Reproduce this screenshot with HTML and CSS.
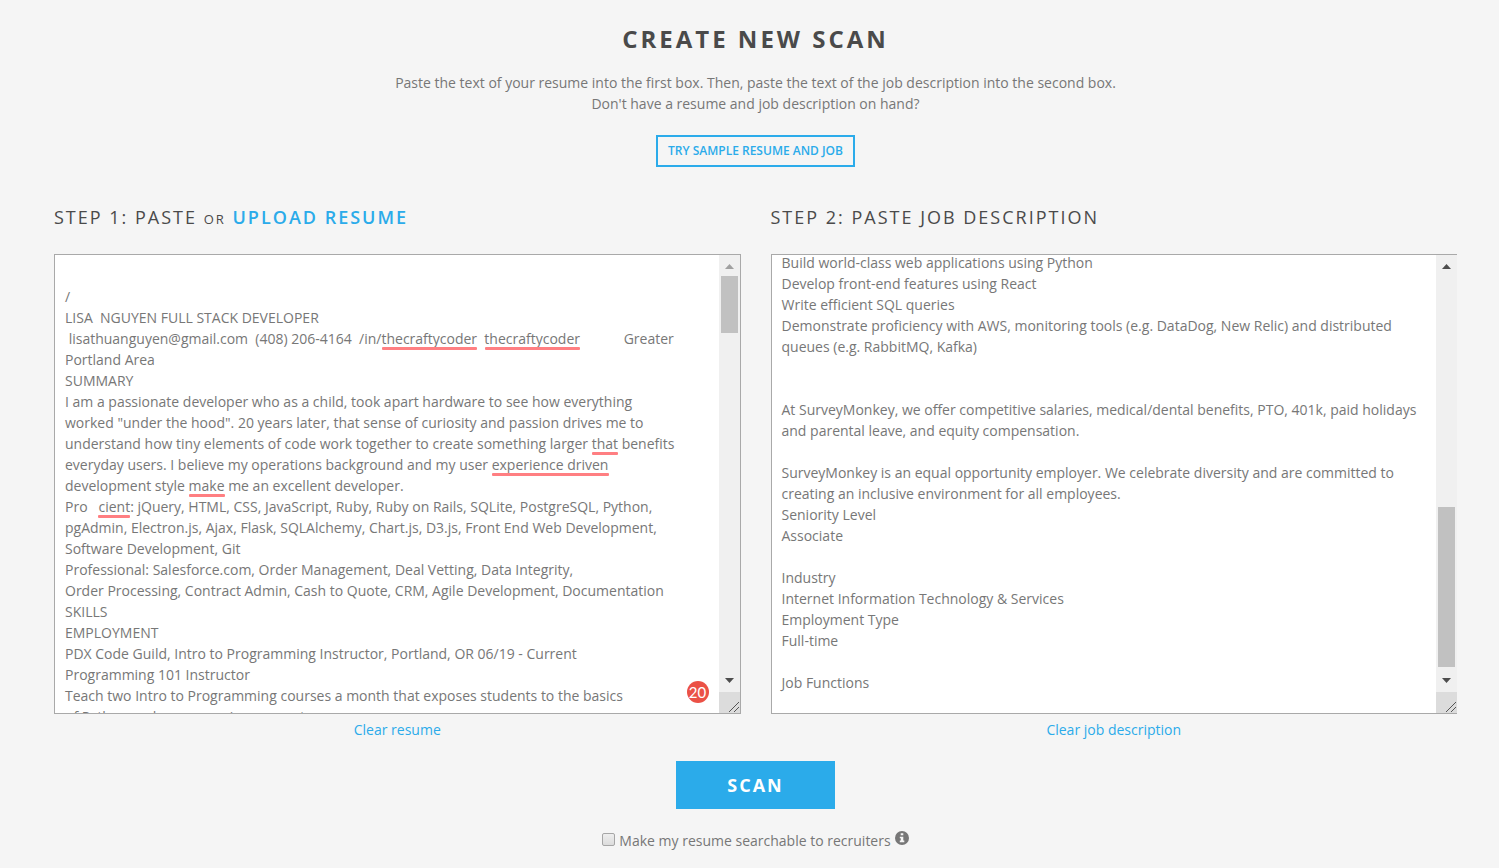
FILE: index.html
```html
<!DOCTYPE html>
<html lang="en">
<head>
<meta charset="utf-8">
<meta name="viewport" content="width=device-width, initial-scale=1">
<title>Create New Scan</title>
<link rel="stylesheet" href="styles.css">
</head>
<body>
<main class="page">
  <header class="intro">
    <h1 class="title">Create new scan</h1>
    <p class="lead">Paste the text of your resume into the first box. Then, paste the text of the job description into the second box.<br>Don't have a resume and job description on hand?</p>
    <button class="sample" type="button">Try sample resume and job</button>
  </header>

  <form class="scan-form">
    <div class="columns">
      <section class="column">
        <h2 class="step"><label for="resume">Step 1: Paste</label> <small class="or">or</small> <a class="upload" href="#upload">Upload resume</a></h2>
        <div class="box">
          <textarea class="field field-resume" id="resume" spellcheck="false">

/
LISA  NGUYEN FULL STACK DEVELOPER
 lisathuanguyen@gmail.com  (408) 206-4164  /in/thecraftycoder  thecraftycoder            Greater Portland Area
SUMMARY
I am a passionate developer who as a child, took apart hardware to see how everything worked "under the hood". 20 years later, that sense of curiosity and passion drives me to understand how tiny elements of code work together to create something larger that benefits everyday users. I believe my operations background and my user experience driven development style make me an excellent developer.
Pro   cient: jQuery, HTML, CSS, JavaScript, Ruby, Ruby on Rails, SQLite, PostgreSQL, Python, pgAdmin, Electron.js, Ajax, Flask, SQLAlchemy, Chart.js, D3.js, Front End Web Development, Software Development, Git
Professional: Salesforce.com, Order Management, Deal Vetting, Data Integrity,
Order Processing, Contract Admin, Cash to Quote, CRM, Agile Development, Documentation
SKILLS
EMPLOYMENT
PDX Code Guild, Intro to Programming Instructor, Portland, OR 06/19 - Current
Programming 101 Instructor
Teach two Intro to Programming courses a month that exposes students to the basics
of Python and programming concepts.</textarea>
          <div class="scrollbar" aria-hidden="true">
            <svg class="arrow arrow-off" viewBox="0 0 21 21"><path d="M6 14h9l-4.500-5z"/></svg>
            <div class="track"><div class="thumb thumb-resume"></div></div>
            <svg class="arrow" viewBox="0 0 21 21"><path d="M6 7h9l-4.500 5z"/></svg>
            <svg class="grip" viewBox="0 0 21 21"><path d="M10 20L20 10M15 20L20 15"/></svg>
          </div>
          <i class="issue issue-handle"></i>
          <i class="issue issue-name"></i>
          <i class="issue issue-that"></i>
          <i class="issue issue-driven"></i>
          <i class="issue issue-make"></i>
          <i class="issue issue-cient"></i>
          <span class="count">20</span>
        </div>
        <a class="clear" href="#clear-resume">Clear resume</a>
      </section>

      <section class="column">
        <h2 class="step"><label for="job">Step 2: Paste job description</label></h2>
        <div class="box box-job">
          <textarea class="field field-job" id="job" spellcheck="false">

Build world-class web applications using Python
Develop front-end features using React
Write efficient SQL queries
Demonstrate proficiency with AWS, monitoring tools (e.g. DataDog, New Relic) and distributed queues (e.g. RabbitMQ, Kafka)


At SurveyMonkey, we offer competitive salaries, medical/dental benefits, PTO, 401k, paid holidays and parental leave, and equity compensation.

SurveyMonkey is an equal opportunity employer. We celebrate diversity and are committed to creating an inclusive environment for all employees.
Seniority Level
Associate

Industry
Internet Information Technology &amp; Services
Employment Type
Full-time

Job Functions



</textarea>
          <div class="scrollbar" aria-hidden="true">
            <svg class="arrow" viewBox="0 0 21 21"><path d="M6 14h9l-4.500-5z"/></svg>
            <div class="track track-job"><div class="thumb thumb-job"></div></div>
            <svg class="arrow" viewBox="0 0 21 21"><path d="M6 7h9l-4.500 5z"/></svg>
            <svg class="grip" viewBox="0 0 21 21"><path d="M10 20L20 10M15 20L20 15"/></svg>
          </div>
        </div>
        <a class="clear" href="#clear-job">Clear job description</a>
      </section>
    </div>

    <button class="scan" type="button">Scan</button>

    <div class="searchable">
      <input class="check" type="checkbox" id="searchable">
      <label for="searchable">Make my resume searchable to recruiters</label>
      <svg class="info" viewBox="0 0 14 14" aria-hidden="true"><circle cx="7" cy="7" r="7"/><path d="M5.700 2.300h2.600v2H5.700zM4.800 5.700h3.500v3.800h1v1.700H4.800V9.500h1V7.300h-1z"/></svg>
    </div>
  </form>
</main>
<script src="script.js"></script>
</body>
</html>
```
FILE: styles.css
```css
* {
  box-sizing: border-box;
}

body {
  margin: 0;
  background: #f5f5f5;
  color: #777;
  font: 14px/21px "Open Sans", "Noto Sans", sans-serif;
}

a {
  color: #2babea;
  text-decoration: none;
}

.page {
  padding: 22px 42px 0 54px;
}

.intro {
  display: flex;
  flex-direction: column;
  align-items: center;
  text-align: center;
}

.title {
  margin: 0 0 16px;
  color: #4a4a4a;
  font-size: 24px;
  line-height: 34px;
  font-weight: 700;
  letter-spacing: 3px;
  text-transform: uppercase;
}

.lead {
  margin: 0 0 21px;
}

.sample {
  height: 32px;
  padding: 0 10px;
  border: 2px solid #2babea;
  background: transparent;
  color: #2babea;
  font: 600 12px/28px "Open Sans", "Noto Sans", sans-serif;
  text-transform: uppercase;
}

.scan-form {
  display: flex;
  flex-direction: column;
  align-items: center;
}

.columns {
  display: grid;
  grid-template-columns: 1fr 1fr;
  gap: 30px;
  width: 100%;
  margin-top: 38px;
}

.column {
  display: flex;
  flex-direction: column;
}

.step {
  margin: 0 0 24px;
  color: #4a4a4a;
  font-size: 18px;
  line-height: 25px;
  font-weight: 400;
  letter-spacing: 2px;
  text-transform: uppercase;
}

.or {
  font-size: 13px;
  line-height: 1;
}

.upload {
  font-weight: 600;
}

.box {
  position: relative;
  display: flex;
  height: 460px;
  border: 1px solid #a9a9a9;
  background: #fff;
}

.box-job {
  border-right: 0;
}

.field {
  flex: 1;
  min-width: 0;
  margin: 0;
  border: 0;
  outline: 0;
  resize: none;
  overflow: hidden;
  background: transparent;
  color: inherit;
  font: inherit;
}

.field-resume {
  padding: 10px 40px 10px 10px;
}

.field-job {
  padding: 10px;
}

.scrollbar {
  display: flex;
  flex-direction: column;
  flex: 0 0 21px;
  background: #f0f0f0;
}

.arrow {
  width: 21px;
  height: 21px;
  fill: #4d4d4d;
}

.arrow-off {
  fill: #a0a0a0;
}

.track {
  display: flex;
  flex-direction: column;
  flex: 1;
  padding: 0 2px;
}

.track-job {
  justify-content: flex-end;
  padding-bottom: 4px;
}

.thumb {
  background: #c1c1c1;
}

.thumb-resume {
  height: 57px;
}

.thumb-job {
  height: 160px;
}

.grip {
  width: 21px;
  height: 21px;
  background: #dcdcdc;
  fill: none;
  stroke: #555;
  stroke-width: 1;
}

.issue {
  position: absolute;
  height: 3px;
  border-radius: 1px;
  background: #ff7f82;
}

.issue-handle {
  top: 92px;
  left: 327px;
  width: 95px;
}

.issue-name {
  top: 92px;
  left: 430px;
  width: 95px;
}

.issue-that {
  top: 197px;
  left: 537px;
  width: 26px;
}

.issue-driven {
  top: 218px;
  left: 437px;
  width: 117px;
}

.issue-make {
  top: 239px;
  left: 134px;
  width: 36px;
}

.issue-cient {
  top: 260px;
  left: 43px;
  width: 32px;
}

.count {
  position: absolute;
  right: 31px;
  bottom: 10px;
  width: 22px;
  height: 22px;
  border-radius: 50%;
  background: #eb5146;
  color: #fff;
  font: 15px/22px Lato, sans-serif;
  text-align: center;
}

.clear {
  align-self: center;
  margin-top: 5px;
}

.scan {
  width: 159px;
  height: 48px;
  margin-top: 21px;
  padding: 0;
  border: 0;
  background: #2babea;
  color: #fff;
  font: 700 18px/48px "Open Sans", "Noto Sans", sans-serif;
  letter-spacing: 2px;
  text-transform: uppercase;
}

.searchable {
  display: flex;
  align-items: center;
  gap: 4px;
  margin-top: 21px;
}

.check {
  appearance: none;
  width: 13px;
  height: 13px;
  margin: 0;
  margin-bottom: 2px;
  border: 1px solid #a6a6a6;
  border-radius: 2px;
  background: linear-gradient(#eee, #dcdcdc);
}

.check:checked {
  background: #2babea;
}

.info {
  width: 14px;
  height: 14px;
  margin-bottom: 6px;
  fill: #777;
}

.info path {
  fill: #f5f5f5;
}
```
FILE: script.js
```js
// Open the job description part-way down, past its blank first line.
document.getElementById("job").scrollTop = 34;
```
